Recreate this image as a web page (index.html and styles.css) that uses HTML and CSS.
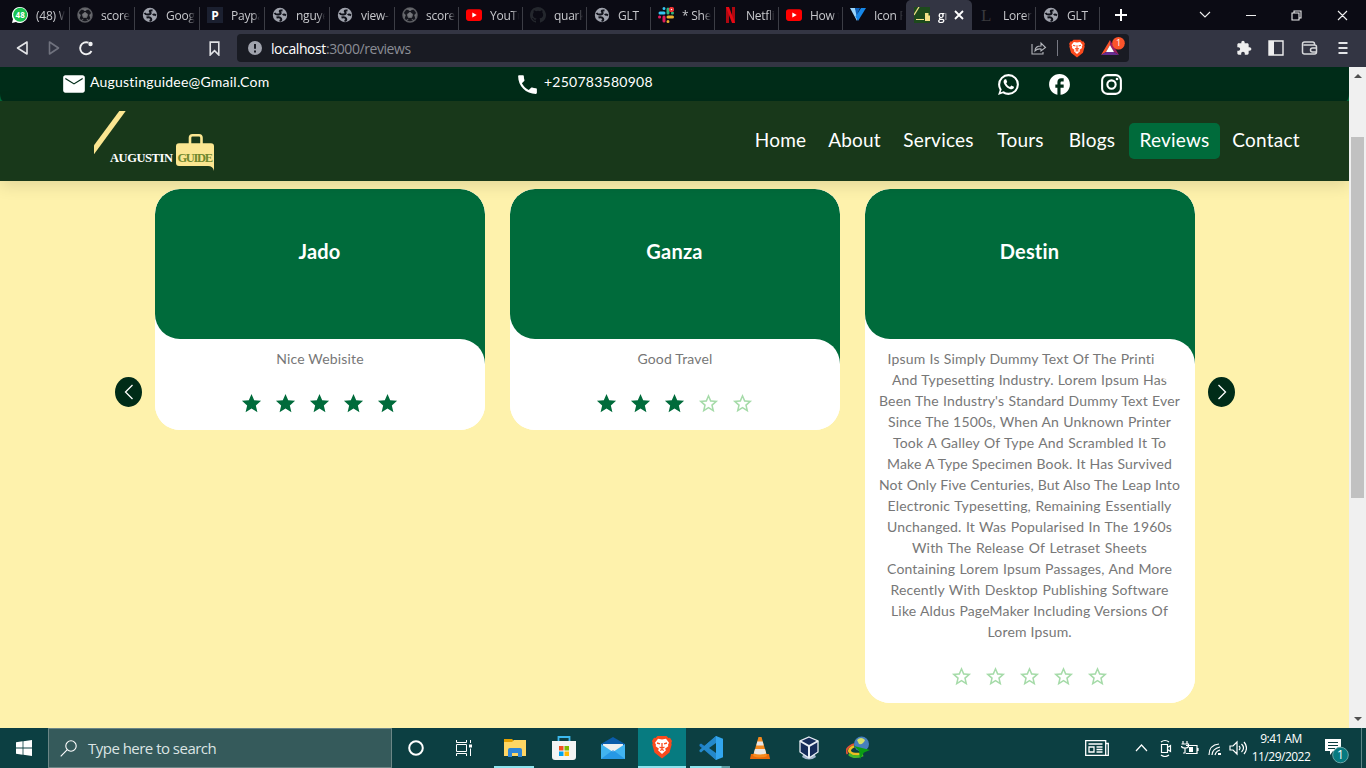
FILE: index.html
```html
<!DOCTYPE html>
<html lang="en">
<head>
<meta charset="utf-8">
<title>Augustin Guide - Reviews</title>
<link rel="stylesheet" href="styles.css">
</head>
<body>
<svg class="defs" aria-hidden="true">
  <symbol id="globe" viewBox="0 0 16 16"><circle cx="8" cy="8" r="7.200" fill="#a0a3ad"/><path d="M2.500 6Q4 8 6.500 7.500 10 7 8 4.800 7 3 10.500 3.500M14 8.500Q12 6.800 10.800 8.200M4.500 10.500Q8 9.500 9 11.500T7.500 14" fill="none" stroke="#10121a" stroke-width="2"/></symbol>
  <symbol id="ball" viewBox="0 0 16 16"><circle cx="8" cy="8" r="7" fill="#15161d" stroke="#5a5b60" stroke-width="1.600"/><path d="M8 5.300l2.700 2-1 3.100H6.300l-1-3.100zM5 1.800h6L8 3.700zM1.300 6l2 2-1 3zM14.700 6l-2 2 1 3zM4 13.600l2.300-1.300M12 13.600l-2.300-1.300" fill="#77787c" stroke="#66676c"/></symbol>
  <symbol id="youtube" viewBox="0 0 16 16"><rect y="2.300" width="16" height="11.600" rx="2.800" fill="#f00"/><path d="M6.300 5.600v5l4.400-2.500z" fill="#fff"/></symbol>
  <symbol id="star" viewBox="0 0 24 24"><path d="M12 17.270L18.180 21l-1.640-7.030L22 9.240l-7.190-.61L12 2 9.190 8.630 2 9.240l5.460 4.730L5.820 21z"/></symbol>
  <symbol id="star-empty" viewBox="0 0 24 24"><path d="M22 9.240l-7.190-.62L12 2 9.190 8.630 2 9.240l5.460 4.730L5.820 21 12 17.270 18.180 21l-1.630-7.030L22 9.240zM12 15.400l-3.760 2.270 1-4.280-3.320-2.880 4.380-.38L12 6.100l1.710 4.040 4.380.38-3.320 2.880 1 4.280L12 15.400z"/></symbol>
  <symbol id="brave" viewBox="0 0 20 24"><path d="M5.500 1h9l2 2 1.500-.2L20 6l-.7 2 .4 1.500-2.200 8L10 23.500l-7.500-6-2.200-8L.7 8 0 6l2-3.200 1.500.2z" fill="#fb4a1d"/><path d="M10 4.500l4-.8 3 4-1 2 .3 1.600-3.300 2.500 1 1.500L10 19l-4-3.700 1-1.500-3.300-2.500L4 9.700l-1-2 3-4z" fill="#fff"/><path d="M5 8l3 .8M15 8l-3 .8M10 8v4.500M7.500 12l2.500 1.300 2.500-1.300M8.200 15.500l1.800-1 1.800 1" fill="none" stroke="#fb4a1d" stroke-width="1.300"/></symbol>
</svg>

<header class="tabs">
  <div class="tab first"><svg class="fav" viewBox="0 0 16 16"><path d="M8 0a8 8 0 1 1-4 15L0 16l1-4A8 8 0 0 1 8 0z" fill="#fff"/><circle cx="8.200" cy="7.800" r="7" fill="#19c350"/><text x="8.200" y="10.500" class="badge-text">48</text></svg><span>(48) W</span></div>
  <div class="tab"><svg class="fav"><use href="#ball"/></svg><span>scores</span></div>
  <div class="tab"><svg class="fav"><use href="#globe"/></svg><span>Googl</span></div>
  <div class="tab"><svg class="fav" viewBox="0 0 16 16"><path fill="#1b2030" d="M0 0h16v16H0z"/><text x="8" y="12.500" class="p-text">P</text></svg><span>Paypal</span></div>
  <div class="tab"><svg class="fav"><use href="#globe"/></svg><span>nguye</span></div>
  <div class="tab"><svg class="fav"><use href="#globe"/></svg><span>view-s</span></div>
  <div class="tab short"><svg class="fav"><use href="#ball"/></svg><span>scores</span></div>
  <div class="tab short"><svg class="fav"><use href="#youtube"/></svg><span>YouTu</span></div>
  <div class="tab short"><svg class="fav" viewBox="0 0 16 16"><path fill="#24272d" d="M8 0C3.580 0 0 3.580 0 8c0 3.540 2.290 6.530 5.470 7.590.4.070.55-.17.55-.38 0-.19-.01-.82-.01-1.490-2.010.37-2.530-.49-2.690-.94-.09-.23-.48-.94-.82-1.130-.28-.15-.68-.52-.01-.53.63-.01 1.080.58 1.230.82.72 1.210 1.870.87 2.330.66.07-.52.28-.87.510-1.070-1.780-.2-3.640-.89-3.640-3.950 0-.87.31-1.590.82-2.150-.08-.2-.36-1.020.08-2.120 0 0 .67-.21 2.200.82a7.600 7.600 0 0 1 4 0c1.530-1.040 2.200-.82 2.200-.82.44 1.100.16 1.920.08 2.120.51.560.82 1.270.82 2.150 0 3.070-1.870 3.750-3.650 3.950.29.25.54.730.54 1.480 0 1.070-.01 1.930-.01 2.200 0 .21.15.46.55.38A8 8 0 0 0 8 0z"/></svg><span>quark</span></div>
  <div class="tab short"><svg class="fav"><use href="#globe"/></svg><span>GLT</span></div>
  <div class="tab short"><svg class="fav" viewBox="0 0 16 16" fill="none" stroke-width="3" stroke-linecap="round"><path stroke="#36c5f0" d="M2 6h4M6 1.500v.1"/><path stroke="#2eb67d" d="M10 2v4M14.500 6h-.1"/><path stroke="#ecb22e" d="M10 10h4.500M10 14.500v-.1"/><path stroke="#e01e5a" d="M6 10v4M1.500 10h.1"/><circle cx="13.500" cy="2.500" r="1.700" fill="#fff" stroke="#e33" stroke-width="2"/></svg><span>* Shee</span></div>
  <div class="tab short"><svg class="fav" viewBox="0 0 16 16"><path fill="#b00710" d="M4 0h3v16H4zM10 0h3v16h-3z"/><path fill="#e50914" d="M4 0h3l6 16h-3z"/></svg><span>Netflix</span></div>
  <div class="tab short"><svg class="fav"><use href="#youtube"/></svg><span>How t</span></div>
  <div class="tab short last-inactive"><svg class="fav" viewBox="0 0 16 16"><path fill="#9bd5fb" d="M0 1h5l3 7-1 6z"/><path fill="#1687e8" d="M16 1h-5L5.500 9.500 8 14z"/><path fill="#0b61bd" d="M5 1h5L6.500 9z"/></svg><span>Icon F</span></div>
  <div class="tab active"><svg class="fav" viewBox="0 0 16 16"><path fill="#1d4a1c" d="M0 0h16v16H0z"/><path d="M0 8L5 0" stroke="#f2df86" stroke-width="1.300"/><path fill="#f2df86" d="M11 8.500V6h3.500v2.500H16V14h-5zM2 12h8v1H2z"/></svg><span>gr</span><svg class="close" viewBox="0 0 10 10"><path d="M1 1l8 8M9 1L1 9"/></svg></div>
  <div class="tab short"><svg class="fav" viewBox="0 0 16 16"><text x="2" y="14" class="l-text">L</text></svg><span>Lorem</span></div>
  <div class="tab short"><svg class="fav"><use href="#globe"/></svg><span>GLT</span></div>
  <svg class="plus" viewBox="0 0 12 12"><path d="M6 0v12M0 6h12"/></svg>
  <svg class="window-controls" viewBox="0 0 150 14"><path d="M1 4l5 5 5-5M47 7.500h10M93 5h7v7h-7zM95 5V3h7v7h-2M139 3l9 9M148 3l-9 9"/></svg>
</header>

<div class="toolbar">
  <svg class="nav-icons" viewBox="0 0 80 16" fill="none" stroke-width="1.600" stroke-linejoin="round"><path stroke="#e4e5e8" d="M12 2v12L2.500 8z"/><path stroke="#70727e" d="M34.500 2v12l9-6z"/><path stroke="#f0f0f2" stroke-width="1.900" d="M76.500 11A6 6 0 1 1 73.500 2.700"/><circle cx="75.500" cy="4" r="2.200" fill="#f0f0f2"/></svg>
  <svg class="bookmark" viewBox="0 0 10 14"><path d="M1 1h8v12L5 9l-4 4z"/></svg>
  <div class="address">
    <svg class="info" viewBox="0 0 14 14"><circle cx="7" cy="7" r="7"/><path d="M7 3v4.700M7 9.500v2" stroke="#191b23" stroke-width="2"/></svg>
    <span class="url"><b>localhost</b>:3000/reviews</span>
    <svg class="share" viewBox="0 0 16 14"><path d="M1 3v10h11v-2M4 10q0-5 6-5V2l4.500 4.500L10 10V8Q6 7.500 4 10z"/></svg>
    <i class="rule"></i>
    <svg class="brave-small"><use href="#brave"/></svg>
    <svg class="bat" viewBox="0 0 26 20"><path fill="#fb542b" d="M10 3L1 18l5-3 4-7z"/><path fill="#9e1f63" d="M10 3l9 15-5-3-4-7z"/><path fill="#662d91" d="M1 18h18l-5-3H6z"/><path fill="#fff" d="M10 8l4 7H6z"/><circle cx="18.500" cy="6.300" r="6.300" fill="#fb542b"/><text x="18.500" y="9.300" class="count">1</text></svg>
  </div>
  <svg class="ext" viewBox="0 0 24 24"><path d="M20.500 11H19V7c0-1.100-.9-2-2-2h-4V3.500C13 2.120 11.880 1 10.500 1S8 2.120 8 3.500V5H4c-1.100 0-1.990.9-1.990 2v3.800H3.500c1.490 0 2.700 1.210 2.700 2.700s-1.210 2.700-2.700 2.700H2V20c0 1.100.9 2 2 2h3.800v-1.500c0-1.490 1.210-2.700 2.700-2.700 1.490 0 2.700 1.210 2.700 2.700V22H17c1.100 0 2-.9 2-2v-4h1.500c1.380 0 2.500-1.120 2.500-2.500S21.880 11 20.500 11z"/></svg>
  <svg class="side" viewBox="0 0 16 16"><path d="M1 1h14v14H1z" fill="none" stroke="#eee" stroke-width="1.400"/><path d="M1 1h5v14H1z" fill="#eee"/></svg>
  <svg class="wallet" viewBox="0 0 16 16" fill="none" stroke="#d8d9dc" stroke-width="1.500"><path d="M13 5V4q0-2-2-2H3Q1 2 1 4v8q0 2 2 2h10q2 0 2-2V7q0-2-2-2H2M15 8h-4a1.500 1.500 0 0 0 0 4h4"/></svg>
  <svg class="menu" viewBox="0 0 10 12"><path d="M0 1h9M0 6h9M0 11h9"/></svg>
</div>

<main class="viewport">
  <div class="page">
    <div class="contact-wrap"><div class="contact-bar">
      <div class="contact email"><svg viewBox="0 0 24 24"><path d="M20 4H4c-1.100 0-1.990.9-1.990 2L2 18c0 1.100.9 2 2 2h16c1.100 0 2-.9 2-2V6c0-1.100-.9-2-2-2zm0 3.500l-8 5-8-5V6.300l8 5 8-5v1.200z"/></svg><span>Augustinguidee@Gmail.Com</span></div>
      <div class="contact phone"><svg viewBox="0 0 24 24"><path d="M6.620 10.790c1.440 2.830 3.760 5.140 6.590 6.590l2.200-2.200c.27-.27.67-.36 1.020-.24 1.120.37 2.330.57 3.570.57.55 0 1 .45 1 1V20c0 .55-.45 1-1 1-9.390 0-17-7.610-17-17 0-.55.45-1 1-1h3.500c.55 0 1 .45 1 1 0 1.250.2 2.450.57 3.570.11.35.03.74-.25 1.020l-2.200 2.200z"/></svg><span>+250783580908</span></div>
      <div class="social">
        <svg viewBox="0 0 24 24"><path d="M16.750 13.960c.25.13.41.2.46.3.06.11.04.61-.21 1.180-.2.56-1.240 1.100-1.700 1.120-.46.02-.47.36-2.960-.73-2.490-1.090-3.990-3.750-4.110-3.920-.12-.17-.96-1.380-.92-2.610.05-1.220.69-1.800.95-2.040.24-.26.51-.29.68-.26h.47c.15 0 .36-.06.55.45l.69 1.870c.06.13.1.28.01.44l-.27.41-.39.42c-.12.12-.26.25-.12.5.12.26.62 1.090 1.320 1.780.91.88 1.710 1.170 1.950 1.300.24.14.39.12.54-.04l.81-.94c.19-.25.35-.19.58-.11l1.670.88M12 2a10 10 0 0 1 10 10 10 10 0 0 1-10 10c-1.970 0-3.800-.57-5.350-1.550L2 22l1.550-4.650A9.969 9.969 0 0 1 2 12 10 10 0 0 1 12 2m0 2a8 8 0 0 0-8 8c0 1.720.54 3.310 1.460 4.610L4.500 19.500l2.890-.96A7.950 7.950 0 0 0 12 20a8 8 0 0 0 8-8 8 8 0 0 0-8-8z"/></svg>
        <svg viewBox="0 0 24 24"><path d="M22 12c0-5.520-4.480-10-10-10S2 6.480 2 12c0 4.840 3.440 8.870 8 9.800V15H8v-3h2V9.500C10 7.570 11.570 6 13.500 6H16v3h-2c-.55 0-1 .45-1 1v2h3v3h-3v6.950c5.050-.5 9-4.760 9-9.950z"/></svg>
        <svg viewBox="0 0 24 24"><rect x="3" y="3" width="18" height="18" rx="5" fill="none" stroke="#fff" stroke-width="2"/><circle cx="12" cy="12" r="4" fill="none" stroke="#fff" stroke-width="2"/><circle cx="17.300" cy="6.700" r="1.300"/></svg>
      </div>
    </div></div>
    <nav class="navbar">
      <svg class="logo" viewBox="0 0 120 60"><path fill="#fbe691" d="M0 34.300L25.300 0h6.400L0 43.300z"/><rect x="96" y="24.200" width="11.500" height="14" rx="2.500" fill="none" stroke="#fbe691" stroke-width="2.600"/><path fill="#fbe691" d="M85 32.300h32q3 0 3 3V60q-1-5-6-5H85q-3 0-3-3V35.300q0-3 3-3z"/><text x="16" y="51.300" textLength="63" class="logo-a">AUGUSTIN</text><text x="83.500" y="51.300" textLength="35.500" class="logo-g">GUIDE</text></svg>
      <ul class="links"><li class="w-home">Home</li><li class="w-about">About</li><li class="w-services">Services</li><li class="w-tours">Tours</li><li class="w-blogs">Blogs</li><li class="w-reviews current">Reviews</li><li class="w-contact">Contact</li></ul>
    </nav>
    <section class="slider">
      <button class="arrow"><svg viewBox="0 0 10 16"><path d="M8.500 1L1.500 8l7 7"/></svg></button>
      <div class="cards">
        <article class="card"><h2>Jado</h2><div class="body"><div class="inner"><p>Nice Webisite</p>
          <div class="stars"><svg><use href="#star"/></svg><svg><use href="#star"/></svg><svg><use href="#star"/></svg><svg><use href="#star"/></svg><svg><use href="#star"/></svg></div></div></div></article>
        <article class="card"><h2>Ganza</h2><div class="body"><div class="inner"><p>Good Travel</p>
          <div class="stars"><svg><use href="#star"/></svg><svg><use href="#star"/></svg><svg><use href="#star"/></svg><svg class="off"><use href="#star-empty"/></svg><svg class="off"><use href="#star-empty"/></svg></div></div></div></article>
        <article class="card"><h2>Destin</h2><div class="body"><div class="inner"><p class="long">
          <span class="l1">Ipsum Is Simply Dummy Text Of The Printi</span>
          <span class="l2">And Typesetting Industry. Lorem Ipsum Has</span>
          <span class="l3">Been The Industry's Standard Dummy Text Ever</span>
          <span class="l4">Since The 1500s, When An Unknown Printer</span>
          <span class="l5">Took A Galley Of Type And Scrambled It To</span>
          <span class="l6">Make A Type Specimen Book. It Has Survived</span>
          <span class="l7">Not Only Five Centuries, But Also The Leap Into</span>
          <span class="l8">Electronic Typesetting, Remaining Essentially</span>
          <span class="l9">Unchanged. It Was Popularised In The 1960s</span>
          <span class="l10">With The Release Of Letraset Sheets</span>
          <span class="l11">Containing Lorem Ipsum Passages, And More</span>
          <span class="l12">Recently With Desktop Publishing Software</span>
          <span class="l13">Like Aldus PageMaker Including Versions Of</span>
          <span class="l14">Lorem Ipsum.</span></p>
          <div class="stars"><svg class="off"><use href="#star-empty"/></svg><svg class="off"><use href="#star-empty"/></svg><svg class="off"><use href="#star-empty"/></svg><svg class="off"><use href="#star-empty"/></svg><svg class="off"><use href="#star-empty"/></svg></div></div></div></article>
      </div>
      <button class="arrow"><svg viewBox="0 0 10 16"><path d="M1.500 1l7 7-7 7"/></svg></button>
    </section>
  </div>
  <div class="scrollbar"><i class="up"></i><div class="thumb"></div><i class="down"></i></div>
</main>

<footer class="taskbar">
  <div class="start"><svg viewBox="0 0 16 16"><path d="M0 2.300L6.600 1.300v6.300H0zM7.400 1.200L16 0v7.600H7.400zM0 8.400h6.600v6.300L0 13.700zM7.400 8.400H16V16l-8.600-1.200z"/></svg></div>
  <div class="search"><svg viewBox="0 0 17 17"><circle cx="11" cy="6" r="5.200"/><path d="M7.300 9.700L.7 16.300"/></svg><span>Type here to search</span></div>
  <div class="task cortana"><svg viewBox="0 0 16 16"><circle cx="8" cy="8" r="6.800" fill="none" stroke="#fff" stroke-width="2"/></svg></div>
  <div class="task views"><svg class="i16" viewBox="0 0 16 16"><path fill="none" stroke="#fff" d="M.5 0v2.500h10V0M.5 16v-2.500h10V16M.5 4.500h10v7H.500zM14.500 0v3M14.500 8.500V16"/><path fill="#fff" d="M13 4.500h3v3h-3z"/></svg></div>
  <div class="task line"><svg class="i22" viewBox="0 0 22 20"><path fill="#e6a100" d="M0 1h8l2 2v4H0z"/><path fill="#ffd764" d="M0 4h8l2-2h12v16H0z"/><path fill="#2f86d6" d="M4 19v-7q0-2 2-2h10q2 0 2 2v7h-4v-4H8v4z"/></svg></div>
  <div class="task"><svg class="i24" viewBox="0 0 24 24"><path fill="none" stroke="#3cb9ee" stroke-width="1.800" d="M6.500 6V1h11v5"/><path fill="#f4f4f4" d="M0 5h24v16q0 3-3 3H3q-3 0-3-3z"/><path fill="#f25022" d="M7 10h4.500v4.500H7z"/><path fill="#7fba00" d="M12.500 10H17v4.500h-4.500z"/><path fill="#00a4ef" d="M7 15.500h4.500V20H7z"/><path fill="#ffb900" d="M12.500 15.500H17V20h-4.500z"/></svg></div>
  <div class="task"><svg class="i24" viewBox="0 0 24 24"><path fill="#0b5cab" d="M0 8L12 1l12 7v3H0z"/><path fill="#f0f0f0" d="M2 8h20v9H2z"/><path fill="#41b4f0" d="M0 8l12 8L24 8v15H0z"/><path fill="#1b8be0" d="M0 23l12-9 12 9z" opacity=".7"/></svg></div>
  <div class="task on"><svg class="i22 tall"><use href="#brave"/></svg></div>
  <div class="task line split"><svg class="i24" viewBox="0 0 24 24"><path fill="#1e7fc9" d="M17 0L5.500 10 2 7.500.5 8.500v1.400L17 24l1-1V1z"/><path fill="#2489ca" d="M17 24L5.500 13.500 2 16.500.5 15.500V14L17 0z"/><path fill="#0c3f42" d="M17 7v10l-7-5z"/><path fill="#32a6ee" d="M17 0l7 2.800v18.400L17 24z"/></svg></div>
  <div class="task"><svg class="i22 tall" viewBox="0 0 20 24"><path fill="#e96a0a" d="M1 18h18l1 5H0z"/><path fill="#f58a1e" d="M8.500 1h3L17 20q-7 3-14 0z"/><path fill="#e7e7e7" d="M7.300 5.500h5.400l1 4H6.300zM5 13h10l1.300 4.500q-6 2-12.600 0z"/></svg></div>
  <div class="task"><svg class="i22 tall" viewBox="0 0 20 24"><path fill="#a5b8ce" d="M5 17h10l2 4q-7 5-14 0z"/><path fill="#152c5a" stroke="#e8eef5" stroke-width="1.300" d="M10 1l9 4v11l-9 6-9-6V5z"/><path fill="none" stroke="#e8eef5" stroke-width="2" d="M1 5l9 5 9-5M10 10v12"/></svg></div>
  <div class="task"><svg class="i24" viewBox="0 0 24 24"><path fill="none" stroke="#f0bd20" stroke-width="3" d="M8 10Q2 13 4 16t13 2"/><path fill="none" stroke="#df5236" stroke-width="1.800" d="M8 8Q-2 12 1.500 18"/><path fill="none" stroke="#48b729" stroke-width="2.500" d="M3 18q5 5 14 1"/><circle cx="15.500" cy="8" r="7.500" fill="#477fbd"/><path fill="#d4df6a" d="M11 4q4-4 8 0-2 5-6 4z"/><path fill="#0a9c14" d="M8 10l16 4-6 2.500L14 23l-1-8z"/></svg></div>
  <svg class="news" viewBox="0 0 24 16"><path fill="none" stroke="#fff" stroke-width="1.300" d="M.7.7h20v14.600h-20zM20.700 3.500h2.600v11.800h-4M4 7h5v5H4zM3.500 4h14M11.500 7h6M11.500 9.500h6M11.500 12h6"/></svg>
  <svg class="tray" viewBox="0 0 112 18"><g fill="none" stroke="#fff" stroke-width="1.200"><path d="M1 12l5.500-6 5.500 6M26.500 5.500h6v8h-6zM32.500 8.500l3-2v6l-3-2M26 3q4-3 8 0M26 16q4 3 8 0M51 6.500h11v8H51M63 9v3M48 2v3M52 2v3M46.500 5h7v2q0 2-3.500 2-3.500 0-3.500-2M50 9v5h-2"/><path d="M74 16Q74 6 84 5M77 16q0-6 8-8M80 16q1-4 5-5M95 7h3l4-4v12l-4-4h-3zM104 7q2 2 0 4M106.500 5q4 4 0 8M109 3q5 6 0 12"/></g><path fill="#fff" d="M54 8h4v5h-4zM83 14h3v2h-3z"/></svg>
  <div class="clock"><span class="time">9:41 AM</span><span class="date">11/29/2022</span></div>
  <svg class="notify" viewBox="0 0 25 26"><path fill="#fff" d="M0 0h16v12H8l-3 4v-4H0z"/><path stroke="#0c3f42" d="M3 3.500h10M3 6.500h10M3 9.500h7"/><circle cx="15.500" cy="16" r="7.800" fill="#077a80" stroke="#6aa5a7"/><text x="15.500" y="20" class="notify-text">1</text></svg>
  <i class="desktop"></i>
</footer>
</body>
</html>
```
FILE: styles.css
```css
* { box-sizing: border-box; }
body { margin: 0; width: 1366px; height: 768px; overflow: hidden; display: flex; flex-direction: column; font-family: "Open Sans", sans-serif; }
svg { display: block; flex: none; }
.defs { position: absolute; width: 0; height: 0; }

.tabs { height: 30px; background: #0b0b14; display: flex; align-items: center; padding-left: 4px; color: #c7c8cc; font-size: 12px; }
.tab { width: 65px; height: 30px; padding-left: 7px; display: flex; align-items: center; overflow: hidden; flex: none; position: relative; }
.tab::after { content: ""; position: absolute; right: 0; top: 7px; width: 1px; height: 23px; background: #3c3d45; }
.tab.first { width: 66px; padding-left: 8px; }
.tab.short { width: 64px; }
.tab.last-inactive { width: 63px; }
.tab.last-inactive::after, .tab.active::after { display: none; }
.tab.active { background: #333543; width: 66px; padding-left: 8px; border-radius: 5px 5px 0 0; color: #fff; }
.tab span { margin-left: 8px; width: 29px; overflow: hidden; white-space: nowrap; letter-spacing: -.25px; mask-image: linear-gradient(90deg, #000 75%, transparent); }
.tab.active span { width: 9px; font-weight: 600; }
.fav { width: 16px; height: 16px; }
.badge-text { fill: #fff; font: bold 8px "Open Sans", sans-serif; text-anchor: middle; }
.p-text { fill: #fff; font: bold 12px "Open Sans", sans-serif; text-anchor: middle; }
.l-text { fill: #3a3a3e; font: 17px "Liberation Serif", serif; }
.close { width: 10px; height: 10px; margin-left: 7px; fill: none; stroke: #fff; stroke-width: 1.8; }
.plus { width: 12px; height: 12px; margin-left: 15px; stroke: #fff; stroke-width: 2; }
.window-controls { width: 150px; height: 14px; margin-left: 72px; fill: none; stroke: #eee; stroke-width: 1.1; }

.toolbar { height: 37px; background: #333543; display: flex; align-items: center; padding: 0 0 1px 15px; }
.nav-icons { width: 80px; height: 16px; }
.bookmark { width: 11px; height: 15px; margin-left: 114px; fill: none; stroke: #e0e1e5; stroke-width: 1.5; }
.address { width: 892px; height: 28px; margin-left: 17px; background: #191b23; border-radius: 4px; display: flex; align-items: center; padding-left: 11px; color: #8b8d95; font-size: 14px; }
.info { width: 14px; height: 14px; fill: #a0a3ad; }
.url { margin-left: 9px; width: 760px; letter-spacing: -.42px; }
.url b { color: #fff; font-weight: 400; }
.share { width: 16px; height: 14px; fill: none; stroke: #b5b7bd; stroke-width: 1.1; }
.rule { width: 1px; height: 16px; margin-left: 10px; background: #777983; }
.brave-small { width: 16px; height: 19px; margin-left: 11px; }
.bat { width: 26px; height: 20px; margin-left: 15px; margin-bottom: 2px; }
.count { fill: #fff; font: 9px "Open Sans", sans-serif; text-anchor: middle; }
.ext { width: 16px; height: 16px; margin-left: 107px; fill: #eee; }
.side { width: 16px; height: 16px; margin-left: 16px; }
.wallet { width: 17px; height: 16px; margin-left: 17px; }
.menu { width: 11px; height: 12px; margin-left: 20px; stroke: #e4e5e8; stroke-width: 1.8; }

.viewport { height: 661px; display: flex; background: #fef2ac; }
.page { width: 1349px; overflow: hidden; font-family: Lato, sans-serif; }
.contact-wrap { background: #00693a; height: 34px; }
.contact-bar { height: 34px; background: #002c18; border-radius: 0 0 3px 3px / 0 0 8px 8px; display: flex; color: #fff; padding-left: 61px; }
.contact { display: flex; align-items: center; font-size: 14px; }
.contact svg { width: 25px; height: 25px; fill: #fff; }
.contact span { margin-bottom: 5px; }
.email { width: 454px; }
.email svg { width: 26px; height: 26px; }
.email span { margin-left: 3px; letter-spacing: .22px; }
.phone { width: 480.5px; }
.phone span { margin-left: 4px; letter-spacing: .25px; }
.social { display: flex; align-items: center; gap: 26.500px; }
.social svg { width: 25px; height: 25px; fill: #fff; }
.navbar { height: 80px; background: #18381a; box-shadow: 0 4px 16px rgba(0, 0, 0, .12); position: relative; display: flex; justify-content: space-between; padding: 0 39px 0 94px; align-items: center; }
.logo { width: 120px; height: 60px; }
.logo-a { fill: #fff; font: bold 12.500px "Liberation Serif", serif; }
.logo-g { fill: #71882d; font: bold 12.500px "Liberation Serif", serif; }
.links { display: flex; list-style: none; padding: 0; margin: 0; color: #fff; font-size: 19px; gap: 2px; }
.links li { height: 36px; line-height: 33px; text-align: center; border-radius: 5px; letter-spacing: .22px; }
.links .current { background: #006b3b; }
.w-home { width: 71px; } .w-about { width: 73px; } .w-services { width: 91px; } .w-tours { width: 69px; } .w-blogs { width: 70px; } .w-reviews { width: 91px; } .w-contact { width: 88px; }

.slider { display: flex; padding: 8px 0 0 115px; }
.arrow { width: 27px; height: 30px; border: 0; padding: 0; margin-top: 188px; border-radius: 50%; background: #002c18; display: flex; align-items: center; justify-content: center; }
.arrow svg { width: 10px; height: 16px; fill: none; stroke: #fff; stroke-width: 1.3; }
.cards { display: flex; align-items: flex-start; gap: 25px; margin: 0 13px; }
.card { width: 330px; background: #fff; border-radius: 25px; overflow: hidden; }
.card h2 { margin: 0; height: 150px; background: #006b3b; border-radius: 25px 25px 0 25px; color: #fff; font-size: 20px; line-height: 24px; padding-top: 50px; padding-right: 1px; letter-spacing: .2px; font-variant-ligatures: none; text-align: center; }
.body { background: linear-gradient(#006b3b, #006b3b) right top / 25px 25px no-repeat; }
.inner { background: #fff; border-radius: 0 25px 0 0; padding: 9px 0 15px; }
.inner p { margin: 0; font-size: 14px; line-height: 21px; color: #777; text-align: center; letter-spacing: .17px; font-variant-ligatures: none; }
.long { position: relative; }
.long::after { content: ""; position: absolute; left: 290px; top: 5px; width: 22px; height: 26px; border-radius: 50%; background: #fff; }
.long span { display: block; margin: 0 auto; white-space: nowrap; text-align-last: justify; left: -.5px; position: relative; }
.long .l1 { width: 267px; margin-left: 23px; }
.l2 { width: 275px; } .l3 { width: 301px; } .l4 { width: 283px; } .l5 { width: 273px; } .l6 { width: 285px; } .l7 { width: 301px; letter-spacing: .12px; }
.l8 { width: 284px; } .l9 { width: 285px; } .l10 { width: 235px; } .l11 { width: 285px; } .l12 { width: 278px; } .l13 { width: 277px; } .l14 { width: 84px; }
.stars { display: flex; justify-content: center; gap: 11px; padding: 23px 1px 0 0; }
.stars svg { width: 23px; height: 23px; fill: #006b3b; }
.stars .off { fill: #a6dba9; }

.scrollbar { width: 17px; background: #f0f0f0; display: flex; flex-direction: column; align-items: center; padding: 7px 0; }
.scrollbar i { border: 4px solid transparent; }
.scrollbar .up { border-bottom-color: #505050; border-top: 0; }
.scrollbar .down { border-top-color: #505050; border-bottom: 0; }
.thumb { width: 13px; height: 361px; margin: 59px 0 219px; background: #c1c1c1; }

.taskbar { height: 40px; background: #0c3f42; display: flex; align-items: center; color: #fff; }
.start { width: 48px; display: flex; justify-content: center; }
.start svg { width: 16px; height: 16px; fill: #fff; }
.search { width: 344px; height: 40px; background: #355a5b; border: 1px solid #6b8686; display: flex; align-items: center; padding-left: 11px; color: #dbe4e4; font-size: 15px; }
.search svg { width: 17px; height: 17px; fill: none; stroke: #fff; stroke-width: 1.1; }
.search span { margin-left: 11px; letter-spacing: -.52px; }
.task { width: 49px; height: 40px; display: flex; align-items: center; justify-content: center; position: relative; flex: none; }
.task svg { width: 16px; height: 16px; }
.cortana { width: 47px; }
.views { margin-right: 2px; }
.task .i22 { width: 22px; height: 20px; }
.task .tall { width: 20px; height: 24px; }
.task .i24 { width: 24px; height: 24px; }
.line::after { content: ""; position: absolute; bottom: 0; left: 4px; right: 5px; height: 2px; background: #8de4ee; }
.split::after { background: linear-gradient(90deg, #8de4ee 31px, #5b9da3 32px); }
.task.on { width: 48px; margin-left: 1px; background: #077b80; border-bottom: 2px solid #8de4ee; }
.news { width: 24px; height: 16px; margin-left: 203px; }
.tray { width: 112px; height: 18px; margin-left: 26px; }
.clock { width: 70px; margin-left: -1px; display: flex; flex-direction: column; align-items: center; font-size: 12px; line-height: 18px; letter-spacing: -.5px; white-space: nowrap; }
.notify { width: 25px; height: 26px; margin: 7px 0 0 9px; }
.notify-text { fill: #fff; font: 12px "Open Sans", sans-serif; text-anchor: middle; }
.desktop { width: 1px; height: 40px; margin-left: 11px; background: #5e8586; }
```
